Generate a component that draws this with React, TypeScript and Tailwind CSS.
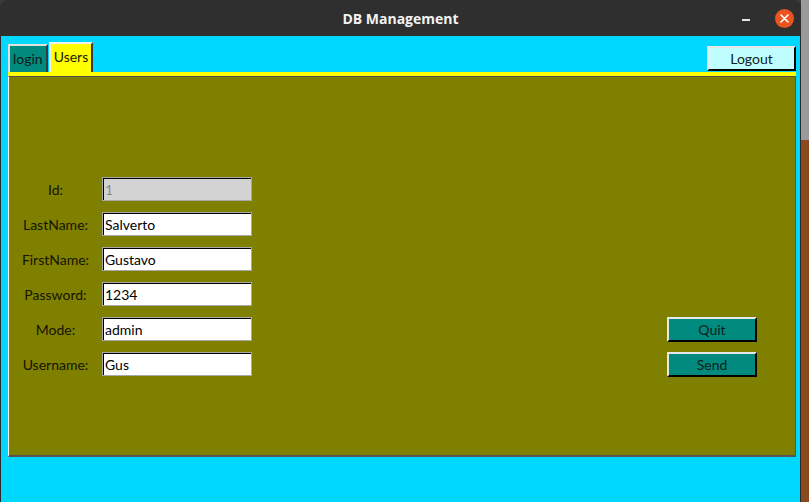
const fields = [
  { label: "Id:", value: "1", disabled: true },
  { label: "LastName:", value: "Salverto" },
  { label: "FirstName:", value: "Gustavo" },
  { label: "Password:", value: "1234" },
  { label: "Mode:", value: "admin" },
  { label: "Username:", value: "Gus" },
];

const Entry = ({ value, disabled }: { value: string; disabled?: boolean }) => (
  <div className="h-[24px] w-[150px] border border-[#a8a8a8]">
    <div
      className={
        "h-full w-full border-t border-l border-black pl-[1px] leading-[21px] text-[14px] " +
        (disabled ? "bg-[#d3d3d3] text-[#8a8a8a] border-[#9a9a9a]" : "bg-white text-black")
      }
    >
      {value}
    </div>
  </div>
);

const TkButton = ({ children, className }: { children: string; className: string }) => (
  <button
    className={
      "border-t-2 border-l-2 border-b-2 border-r-2 border-t-[#e8e8e8] border-l-[#e8e8e8] border-b-black border-r-black text-[14px] text-[#102020] " +
      className
    }
  >
    {children}
  </button>
);

const App = () => {
  return (
    <div className="flex h-[502px] w-[809px] overflow-hidden bg-[#3a3a3a] font-['Lato',sans-serif]">
      <div className="flex w-[801px] flex-col rounded-t-[8px] bg-[#2f2f2f]">
        <div className="relative flex h-[36px] items-center justify-center">
          <span className="font-['Open_Sans',sans-serif] text-[14px] font-bold text-[#f2f2f2]">
            DB Management
          </span>
          <span className="absolute left-[742px] top-[19px] h-[2px] w-[8px] bg-[#e6e6e6]" />
          <span className="absolute left-[775px] top-[9px] flex h-[19px] w-[19px] items-center justify-center rounded-full bg-[#e95420]">
            <svg width="9" height="9" viewBox="0 0 9 9">
              <path d="M1 1L8 8M8 1L1 8" stroke="#fff" strokeWidth="1.6" strokeLinecap="round" />
            </svg>
          </span>
        </div>
        <div className="flex flex-1 flex-col border-l border-r border-[#2a2a2a] bg-[#00d8ff] pr-[4px] pl-[7px] pt-[6px]">
          <div className="flex h-[30px] items-end justify-between">
            <div className="flex items-end">
              <div className="flex h-[28px] items-center border-t-2 border-l-2 border-r-2 border-t-[#e0e0e0] border-l-[#e0e0e0] border-r-[#3a3a3a] bg-[#008b7e] px-[3px] pb-[2px] text-[14px] text-[#0a1a1a]">
                login
              </div>
              <div className="ml-[1px] flex h-[30px] items-center border-t-2 border-l-2 border-r-2 border-t-[#f0f0f0] border-l-[#f0f0f0] border-r-[#3a3a3a] bg-[#ffff00] px-[3px] pb-[3px] text-[14px] text-[#1a1a00]">
                Users
              </div>
            </div>
            <TkButton className="mb-[1px] h-[25px] w-[89px] bg-[#c0ffff]">Logout</TkButton>
          </div>
          <div className="h-[4px] w-[788px] bg-[#ffff00]" />
          <div className="flex h-[381px] w-[788px] border-t border-l border-b-2 border-r border-t-[#505050] border-l-white border-b-[#555555] border-r-[#555555] bg-[#808000] pt-[100px]">
            <div className="flex flex-col gap-[11px]">
              {fields.map((f) => (
                <div key={f.label} className="flex h-[24px] items-center">
                  <span className="w-[93px] text-center text-[14px] text-[#141400]">{f.label}</span>
                  <Entry value={f.value} disabled={f.disabled} />
                </div>
              ))}
            </div>
            <div className="ml-auto mr-[38px] mt-[140px] flex flex-col gap-[10px]">
              <TkButton className="h-[25px] w-[90px] bg-[#008b7e]">Quit</TkButton>
              <TkButton className="h-[25px] w-[90px] bg-[#008b7e]">Send</TkButton>
            </div>
          </div>
        </div>
      </div>
      <div className="flex w-[8px] flex-col">
        <div className="h-[140px] bg-[#9a9a9a]" />
        <div className="flex-1 bg-[#8a4a20]" />
      </div>
    </div>
  );
};

export default App;
